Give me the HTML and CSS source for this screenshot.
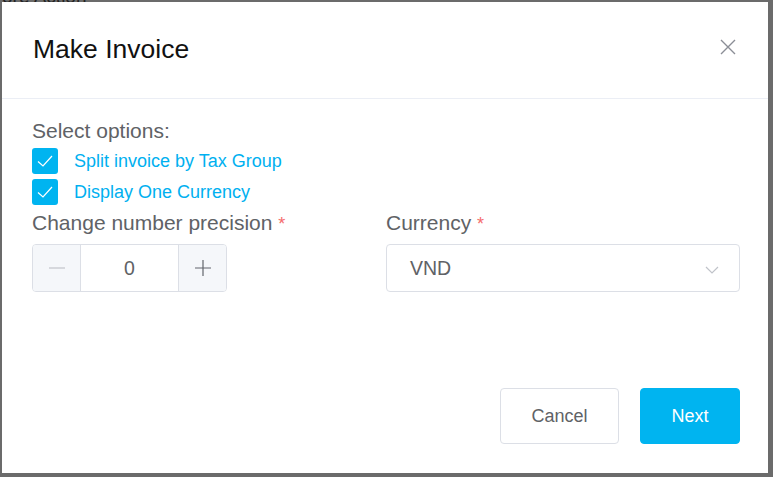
FILE: index.html
```html
<!DOCTYPE html>
<html>
<head>
<meta charset="utf-8">
<link rel="stylesheet" href="styles.css">
</head>
<body>
<div class="backdrop">
  <div class="behind">ore Action</div>
  <div class="dialog">
    <div class="header">
      <h1 class="title">Make Invoice</h1>
      <button class="close" aria-label="Close">
        <svg width="16" height="16" viewBox="0 0 16 16"><path d="M1 1L15 15M15 1L1 15" stroke="#8b8e96" stroke-width="1.4" fill="none"/></svg>
      </button>
    </div>
    <div class="body">
      <div class="label">Select options:</div>
      <label class="check"><span class="box"><svg width="18" height="14" viewBox="0 0 18 14"><path d="M2 7.5L7 12L16 2" stroke="#fff" stroke-width="1.2" fill="none"/></svg></span>Split invoice by Tax Group</label>
      <label class="check"><span class="box"><svg width="18" height="14" viewBox="0 0 18 14"><path d="M2 7.5L7 12L16 2" stroke="#fff" stroke-width="1.2" fill="none"/></svg></span>Display One Currency</label>
      <div class="row">
        <div class="field">
          <div class="flabel">Change number precision <span class="req">*</span></div>
          <div class="num">
            <span class="step"><svg width="16" height="2" viewBox="0 0 16 2"><path d="M0 1H16" stroke="#b7b9bf" stroke-width="1.2"/></svg></span>
            <span class="val">0</span>
            <span class="step plus"><svg width="16" height="16" viewBox="0 0 16 16"><path d="M0 8H16M8 0V16" stroke="#62656c" stroke-width="1.2"/></svg></span>
          </div>
        </div>
        <div class="field">
          <div class="flabel">Currency <span class="req">*</span></div>
          <div class="select">
            <span>VND</span>
            <svg width="14" height="8" viewBox="0 0 14 8"><path d="M1 1L7 7L13 1" stroke="#c0c3c9" stroke-width="1.2" fill="none"/></svg>
          </div>
        </div>
      </div>
    </div>
    <div class="footer">
      <button class="btn cancel">Cancel</button>
      <button class="btn next">Next</button>
    </div>
  </div>
</div>
</body>
</html>
```
FILE: styles.css
```css
* { box-sizing: border-box; }
html, body { margin: 0; padding: 0; }
body {
  width: 773px;
  height: 477px;
  overflow: hidden;
  font-family: "Liberation Sans", Arial, sans-serif;
  background: #6b6b6b;
}
.backdrop {
  position: relative;
  width: 773px;
  height: 477px;
  padding: 2px 5px 4px 2px;
}
.behind {
  position: absolute;
  left: 2px;
  top: -14px;
  font-size: 19px;
  color: #222;
}
.dialog {
  position: relative;
  background: #fff;
  width: 766px;
  height: 471px;
  display: flex;
  flex-direction: column;
}
.header {
  height: 97px;
  border-bottom: 1px solid #ebeef5;
  display: flex;
  align-items: flex-start;
  justify-content: space-between;
  padding: 31px 32px 0 31px;
}
.title {
  margin: 0;
  font-size: 26.5px;
  font-weight: normal;
  color: #111;
  line-height: 32px;
}
.close {
  border: none;
  background: none;
  padding: 0;
  margin-top: 6px;
  width: 16px;
  height: 16px;
  cursor: pointer;
}
.close svg { display: block; }
.body {
  padding: 19px 20px 0 30px;
  flex: 1;
}
.label {
  font-size: 21px;
  color: #606266;
  line-height: 26px;
  margin-bottom: 4px;
}
.check {
  display: flex;
  align-items: center;
  height: 26px;
  margin-bottom: 5px;
  font-size: 18px;
  color: #00b0f0;
}
.box {
  width: 26px;
  height: 26px;
  border-radius: 3px;
  background: #00b4f0;
  display: flex;
  align-items: center;
  justify-content: center;
  margin-right: 16px;
  flex: none;
}
.row {
  display: flex;
}
.field { width: 354px; flex: none; }
.flabel {
  font-size: 21px;
  color: #606266;
  line-height: 26px;
  margin-bottom: 7px;
}
.req { color: #f56c6c; font-size: 18px; }
.num {
  width: 195px;
  height: 48px;
  border: 1px solid #dcdfe6;
  border-radius: 4px;
  display: flex;
  overflow: hidden;
}
.step {
  width: 48px;
  background: #f5f7fa;
  display: flex;
  align-items: center;
  justify-content: center;
  border-right: 1px solid #dcdfe6;
}
.step.plus {
  border-right: none;
  border-left: 1px solid #dcdfe6;
}
.val {
  flex: 1;
  display: flex;
  align-items: center;
  justify-content: center;
  font-size: 19.5px;
  color: #606266;
}
.select {
  width: 354px;
  height: 48px;
  border: 1px solid #dcdfe6;
  border-radius: 4px;
  display: flex;
  align-items: center;
  justify-content: space-between;
  padding: 0 20px 0 23px;
  font-size: 19.5px;
  color: #606266;
}
.select svg { margin-top: 4px; }
.footer {
  display: flex;
  justify-content: flex-end;
  gap: 21px;
  padding: 0 28px 29px 0;
}
.btn {
  height: 56px;
  border-radius: 4px;
  font-family: inherit;
  font-size: 18px;
  cursor: pointer;
}
.cancel {
  width: 119px;
  background: #fff;
  border: 1px solid #dcdfe6;
  color: #606266;
}
.next {
  width: 100px;
  background: #00b4f0;
  border: 1px solid #00b4f0;
  color: #fff;
}
```
